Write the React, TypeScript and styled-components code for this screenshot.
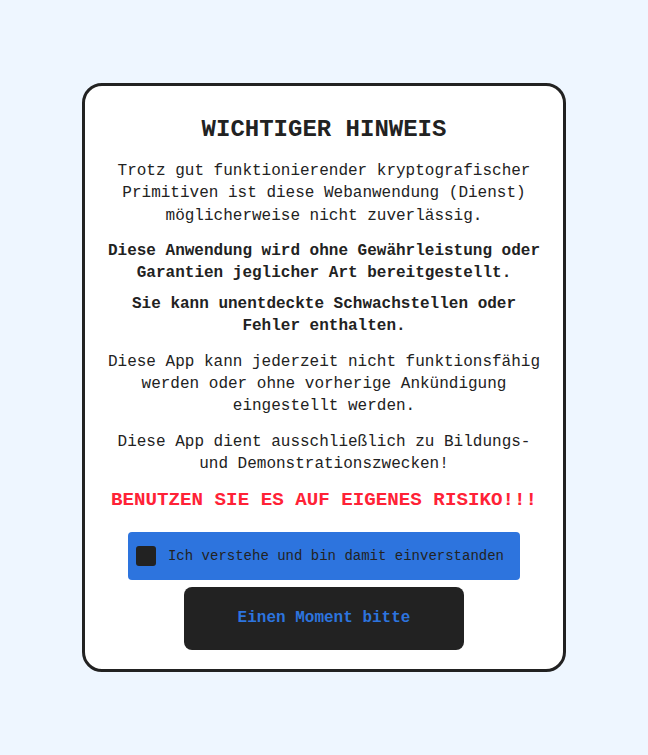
import React from "react";
import styled, { createGlobalStyle } from "styled-components";

const GlobalStyle = createGlobalStyle`
  html, body {
    margin: 0;
    padding: 0;
    background: #eef6ff;
  }
  body {
    font-family: "Liberation Mono", "DejaVu Sans Mono", monospace;
    color: #222222;
  }
  * { box-sizing: border-box; }
`;

const Page = styled.div`
  min-height: 100vh;
  display: flex;
  align-items: center;
  justify-content: center;
`;

const Card = styled.div`
  width: 484px;
  background: #ffffff;
  border: 3px solid #222222;
  border-radius: 20px;
  padding: 30px 16px 19px;
  display: flex;
  flex-direction: column;
  align-items: center;
  text-align: center;
`;

const Title = styled.h1`
  margin: 0 0 15px;
  font-size: 24px;
  line-height: 28.8px;
  font-weight: 700;
  color: #222222;
`;

const Para = styled.p<{ $bold?: boolean; $gap: number }>`
  margin: ${(p) => p.$gap}px 0 0;
  font-size: 16px;
  line-height: 22.4px;
  font-weight: ${(p) => (p.$bold ? 700 : 400)};
  color: #222222;
`;

const Warning = styled.p`
  margin: 12px 0 0;
  font-size: 19.2px;
  line-height: 26.9px;
  font-weight: 700;
  color: #ff2236;
`;

const Consent = styled.label`
  margin-top: 17.5px;
  height: 48px;
  display: inline-flex;
  align-items: center;
  gap: 12px;
  padding: 0 16px 0 8px;
  background: #2d74de;
  border-radius: 4px;
  font-size: 14px;
  color: #222222;
  cursor: pointer;
`;

const Box = styled.span`
  width: 20px;
  height: 20px;
  border-radius: 3px;
  background: #222222;
  flex-shrink: 0;
`;

const Button = styled.button`
  margin-top: 7px;
  width: 280px;
  height: 63px;
  border: none;
  border-radius: 8px;
  background: #222222;
  color: #2d74de;
  font-family: inherit;
  font-size: 16px;
  font-weight: 700;
  cursor: pointer;
`;

export default function App() {
  return (
    <>
      <GlobalStyle />
      <Page>
        <Card>
          <Title>WICHTIGER HINWEIS</Title>
          <Para $gap={0}>
            Trotz gut funktionierender kryptografischer Primitiven ist diese
            Webanwendung (Dienst) möglicherweise nicht zuverlässig.
          </Para>
          <Para $bold $gap={12.8}>
            Diese Anwendung wird ohne Gewährleistung oder Garantien jeglicher
            Art bereitgestellt.
          </Para>
          <Para $bold $gap={8}>
            Sie kann unentdeckte Schwachstellen oder Fehler enthalten.
          </Para>
          <Para $gap={12.8}>
            Diese App kann jederzeit nicht funktionsfähig werden oder ohne
            vorherige Ankündigung eingestellt werden.
          </Para>
          <Para $gap={12.8}>
            Diese App dient ausschließlich zu Bildungs- und
            Demonstrationszwecken!
          </Para>
          <Warning>BENUTZEN SIE ES AUF EIGENES RISIKO!!!</Warning>
          <Consent>
            <Box />
            Ich verstehe und bin damit einverstanden
          </Consent>
          <Button type="button">Einen Moment bitte</Button>
        </Card>
      </Page>
    </>
  );
}
